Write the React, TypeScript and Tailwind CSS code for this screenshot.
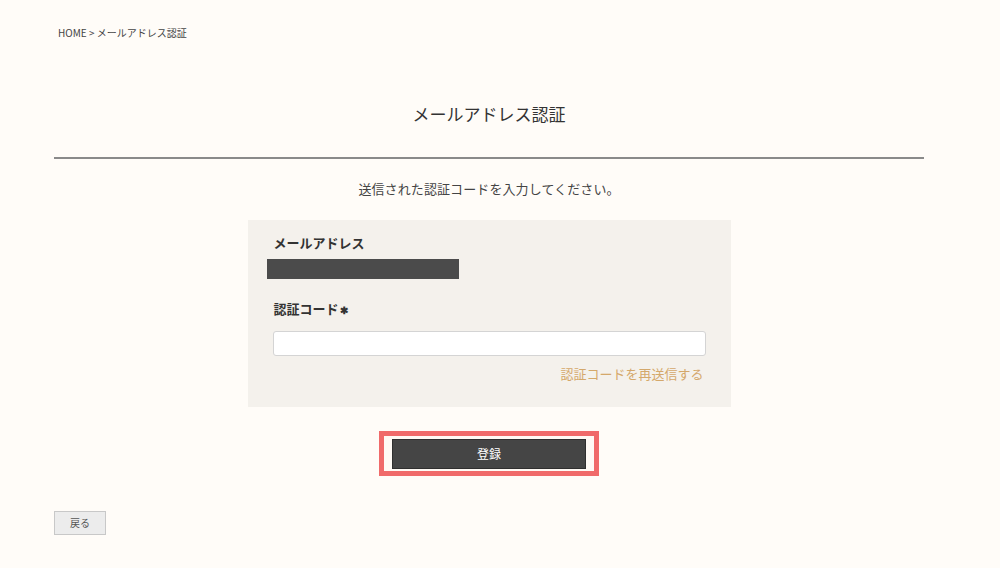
import React from "react";

export default function App() {
  const font = { fontFamily: '"Noto Sans CJK JP", "Noto Sans", sans-serif' };
  return (
    <div className="w-[1000px] h-[568px] bg-[#fffcf8] text-[#333]" style={font}>
      <div className="ml-[54px] w-[870px] flex flex-col">
        <div className="pt-[25px] pl-[4px] text-[10px] leading-[16px] text-[#444]">HOME &gt; メールアドレス認証</div>
        <h1 className="mt-[60px] text-center text-[17px] leading-[26px] text-[#333]">メールアドレス認証</h1>
        <div className="mt-[30px] h-[2px] bg-[#8a8a8a]" />
        <p className="mt-[21px] text-center text-[13px] tracking-[0.1px] leading-[18px] text-[#444]">送信された認証コードを入力してください。</p>
        <div className="mt-[22px] mx-auto w-[483px] h-[187px] bg-[#f4f1ec] px-[25px] pt-[13px]">
          <div className="pl-[1px] text-[13px] leading-[20px] font-bold text-[#333]">メールアドレス</div>
          <div className="mt-[6px] ml-[-6px] w-[192px] h-[20px] bg-[#4b4b4b]" />
          <div className="mt-[18px] pl-[1px] text-[13px] leading-[20px] font-bold text-[#333] flex items-center">
            認証コード<span className="text-[10px] ml-[1px] mt-[3px]">✱</span>
          </div>
          <input className="mt-[11px] block w-[433px] h-[25px] bg-white border border-[#d4d4d4] rounded-[3px] outline-none" />
          <div className="mt-[9px] text-right pr-[2px] text-[13px] leading-[18px] text-[#d4a86b]">認証コードを再送信する</div>
        </div>
        <div className="mt-[24px] mx-auto w-[220px] h-[45px] border-[5px] border-[#f06a6a] bg-[#fffaf5] flex items-center justify-center">
          <button className="w-[194px] h-[30px] bg-[#454545] border border-[#2f2f2f] text-white text-[12px]">登録</button>
        </div>
        <div className="mt-[32px]">
          <button className="w-[52px] h-[24px] bg-[#ececec] border border-[#c8c8c8] text-[10px] text-[#555]">戻る</button>
        </div>
      </div>
    </div>
  );
}
